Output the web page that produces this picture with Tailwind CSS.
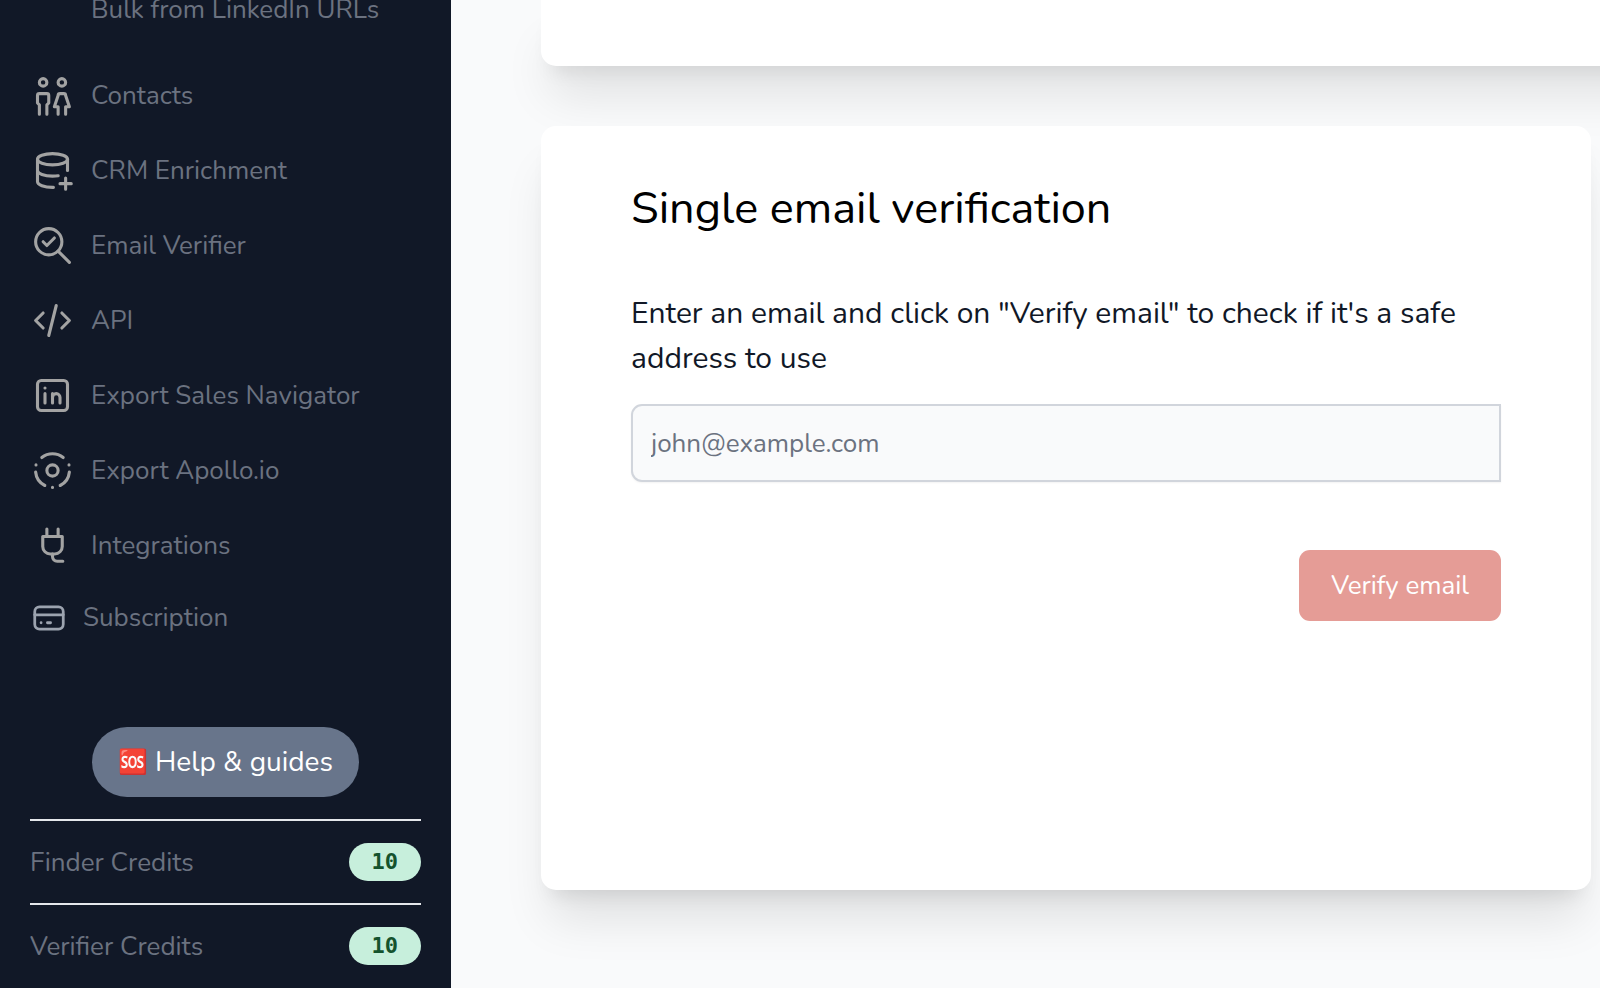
<!DOCTYPE html>
<html lang="en">
<head>
  <meta charset="UTF-8" />
  <meta name="viewport" content="width=device-width, initial-scale=1.0" />
  <title>Email Verifier</title>
  <script src="https://cdn.jsdelivr.net/npm/@tailwindcss/browser@4"></script>
</head>
<body class="flex h-screen overflow-hidden bg-gray-50 font-[Nunito,'Noto_Sans',sans-serif]">

  <!-- Sidebar -->
  <aside class="flex w-[451px] shrink-0 flex-col justify-end bg-[#111827] px-[30px] pb-px text-[26px] text-[#6b7280]">
    <nav class="shrink-0">
      <ul>
        <li class="mb-[19px]"><a href="#" class="flex h-[60px] items-center pl-[61px]">Bulk from LinkedIn URLs</a></li>
        <li>
          <a href="#" class="flex h-[75px] items-center gap-4">
            <svg class="size-[45px] text-[#a3a3a3]" viewBox="0 0 24 24" fill="none" stroke="currentColor" stroke-width="1.65" stroke-linecap="round" stroke-linejoin="round">
              <circle cx="7" cy="5" r="2" />
              <path d="M5 22v-5l-1 -1v-4a1 1 0 0 1 1 -1h4a1 1 0 0 1 1 1v4l-1 1v5" />
              <circle cx="17" cy="5" r="2" />
              <path d="M15 22v-4h-2l2 -6a1 1 0 0 1 1 -1h2a1 1 0 0 1 1 1l2 6h-2v4" />
            </svg>
            Contacts
          </a>
        </li>
        <li>
          <a href="#" class="flex h-[75px] items-center gap-4">
            <svg class="size-[45px] text-[#a3a3a3]" viewBox="0 0 24 24" fill="none" stroke="currentColor" stroke-width="1.65" stroke-linecap="round" stroke-linejoin="round">
              <path d="M4 6c0 1.657 3.582 3 8 3s8 -1.343 8 -3s-3.582 -3 -8 -3s-8 1.343 -8 3" />
              <path d="M4 6v6c0 1.657 3.582 3 8 3c1.075 0 2.1 -.08 3.037 -.224" />
              <path d="M20 12v-6" />
              <path d="M4 12v6c0 1.657 3.582 3 8 3c.166 0 .331 -.002 .495 -.006" />
              <path d="M16 19h6M19 16v6" />
            </svg>
            CRM Enrichment
          </a>
        </li>
        <li>
          <a href="#" class="flex h-[75px] items-center gap-4">
            <svg class="size-[45px] text-[#a3a3a3]" viewBox="0 0 24 24" fill="none" stroke="currentColor" stroke-width="1.65" stroke-linecap="round" stroke-linejoin="round">
              <circle cx="10" cy="10" r="7" />
              <path d="M21 21l-6 -6" />
              <path d="M7 10l2 2l4 -4" />
            </svg>
            Email Verifier
          </a>
        </li>
        <li>
          <a href="#" class="flex h-[75px] items-center gap-4">
            <svg class="size-[45px] text-[#a3a3a3]" viewBox="0 0 24 24" fill="none" stroke="currentColor" stroke-width="1.65" stroke-linecap="round" stroke-linejoin="round">
              <path d="M7 8l-4 4l4 4" />
              <path d="M17 8l4 4l-4 4" />
              <path d="M14 4l-4 16" />
            </svg>
            API
          </a>
        </li>
        <li>
          <a href="#" class="flex h-[75px] items-center gap-4">
            <svg class="size-[45px] text-[#a3a3a3]" viewBox="0 0 24 24" fill="none" stroke="currentColor" stroke-width="1.65" stroke-linecap="round" stroke-linejoin="round">
              <rect x="4" y="4" width="16" height="16" rx="2" />
              <path d="M8 11v5" />
              <path d="M8 8v.01" />
              <path d="M12 16v-5" />
              <path d="M16 16v-3a2 2 0 0 0 -4 0" />
            </svg>
            Export Sales Navigator
          </a>
        </li>
        <li>
          <a href="#" class="flex h-[75px] items-center gap-4">
            <svg class="size-[45px] text-[#a3a3a3]" viewBox="0 0 24 24" fill="none" stroke="currentColor" stroke-width="1.65" stroke-linecap="round" stroke-linejoin="round">
              <circle cx="12" cy="12" r="3" />
              <path d="M6.3 5.1A9 9 0 0 1 17.7 5.1" />
              <path d="M3 12.8a9 9 0 0 0 4.9 7.2" />
              <path d="M21 12.8a9 9 0 0 1 -4.9 7.2" />
              <path d="M3.2 9v.01M20.8 9v.01M12 21v.01" />
            </svg>
            Export Apollo.io
          </a>
        </li>
        <li>
          <a href="#" class="flex h-[75px] items-center gap-4">
            <svg class="size-[45px] text-[#a3a3a3]" viewBox="0 0 24 24" fill="none" stroke="currentColor" stroke-width="1.65" stroke-linecap="round" stroke-linejoin="round">
              <path d="M9 3.2v4M15 3.2v4" />
              <path d="M6.8 7.2h10.4v5.3a4 4 0 0 1 -4 4h-2.4a4 4 0 0 1 -4 -4z" />
              <path d="M12 16.5v1.4a2.5 2.5 0 0 0 2.5 2.5h3" />
            </svg>
            Integrations
          </a>
        </li>
        <li>
          <a href="#" class="flex h-[69px] items-center gap-[15px]">
            <svg class="size-[38px] text-[#9ca3af]" viewBox="0 0 24 24" fill="none" stroke="currentColor" stroke-width="1.75" stroke-linecap="round" stroke-linejoin="round">
              <rect x="3" y="5" width="18" height="14" rx="3" />
              <path d="M3 10h18" />
              <path d="M7 15h.01M11 15h2" />
            </svg>
            Subscription
          </a>
        </li>
      </ul>
    </nav>

    <a href="#" class="mt-[75px] mb-[22px] flex h-[70px] shrink-0 items-center gap-[7px] self-center rounded-full bg-[#68758b] px-[26px] text-[28px] text-white"><span class="text-[24px]">🆘</span>Help &amp; guides</a>

    <div class="flex h-[84px] shrink-0 items-center justify-between border-t-2 border-gray-200">
      <span>Finder Credits</span>
      <span class="rounded-full bg-[#c7efdc] px-[23px] font-['DejaVu_Sans_Mono',monospace] text-[22px] leading-[38px] font-bold text-[#14532d]">10</span>
    </div>
    <div class="flex h-[84px] shrink-0 items-center justify-between border-t-2 border-gray-200">
      <span>Verifier Credits</span>
      <span class="rounded-full bg-[#c7efdc] px-[23px] font-['DejaVu_Sans_Mono',monospace] text-[22px] leading-[38px] font-bold text-[#14532d]">10</span>
    </div>
  </aside>

  <!-- Content -->
  <main class="flex min-w-0 flex-1 flex-col gap-[60px] overflow-hidden pr-[9px] pb-[98px] pl-[90px]">
    <section class="-mr-[90px] h-[66px] shrink-0 rounded-b-[15px] bg-white shadow-[0_38px_47px_-9px_rgb(0_0_0/0.1),0_15px_19px_-11px_rgb(0_0_0/0.1)]"></section>

    <section class="relative flex-1 rounded-[15px] bg-white px-[90px] pt-[53px] shadow-[0_38px_47px_-9px_rgb(0_0_0/0.1),0_15px_19px_-11px_rgb(0_0_0/0.1)]">
      <h2 class="text-[45px] leading-[60px] text-black">Single email verification</h2>
      <form>
        <label for="email" class="mt-[52px] block text-[30px] leading-[45px] text-[#111827]">Enter an email and click on "Verify email" to check if it's a safe address to use</label>
        <input id="email" type="email" placeholder="john@example.com" class="mt-[23px] h-[78px] w-full rounded-l-[11px] border-2 border-gray-300 bg-gray-50 px-[18px] text-[26px] text-gray-900 shadow-xs placeholder:text-[#6b7280]" />
        <div class="mt-[68px] flex justify-end">
          <button type="submit" class="h-[71px] rounded-[11px] bg-[#e59c96] px-[32px] text-[26px] text-white">Verify email</button>
        </div>
      </form>
    </section>
  </main>

</body>
</html>
